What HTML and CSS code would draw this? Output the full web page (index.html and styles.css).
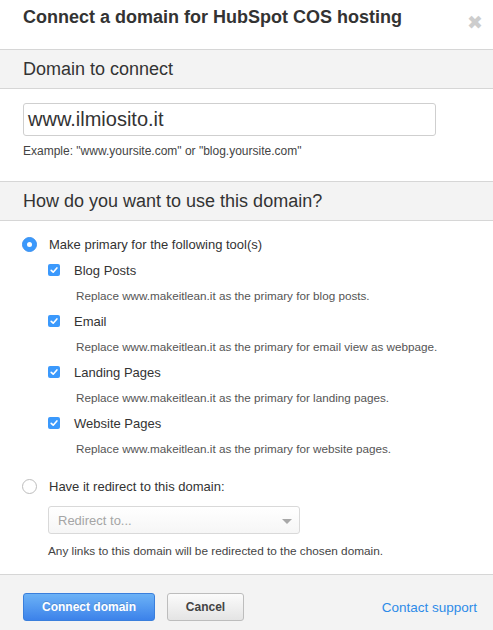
FILE: index.html
```html
<!DOCTYPE html>
<html>
<head>
<meta charset="utf-8">
<link rel="stylesheet" href="styles.css">
</head>
<body>
<div class="modal">
  <div class="modal-header">
    <h1 class="modal-title">Connect a domain for HubSpot COS hosting</h1>
    <span class="close">&#x2716;</span>
  </div>

  <div class="section-title">Domain to connect</div>
  <div class="section-body domain-body">
    <div class="text-input">www.ilmiosito.it</div>
    <div class="hint">Example: "www.yoursite.com" or "blog.yoursite.com"</div>
  </div>

  <div class="section-title">How do you want to use this domain?</div>
  <div class="section-body use-body">
    <div class="radio-row">
      <span class="radio checked"></span>
      <span class="radio-label">Make primary for the following tool(s)</span>
    </div>
    <div class="tools">
      <div class="tool">
        <div class="check-row"><span class="checkbox"><svg viewBox="0 0 12 12" width="12" height="12"><path d="M3.2 6.3 L5.2 8.2 L8.9 3.9" fill="none" stroke="#fff" stroke-width="1.6" stroke-linecap="round" stroke-linejoin="round"/></svg></span><span class="check-label">Blog Posts</span></div>
        <div class="tool-desc">Replace www.makeitlean.it as the primary for blog posts.</div>
      </div>
      <div class="tool">
        <div class="check-row"><span class="checkbox"><svg viewBox="0 0 12 12" width="12" height="12"><path d="M3.2 6.3 L5.2 8.2 L8.9 3.9" fill="none" stroke="#fff" stroke-width="1.6" stroke-linecap="round" stroke-linejoin="round"/></svg></span><span class="check-label">Email</span></div>
        <div class="tool-desc">Replace www.makeitlean.it as the primary for email view as webpage.</div>
      </div>
      <div class="tool">
        <div class="check-row"><span class="checkbox"><svg viewBox="0 0 12 12" width="12" height="12"><path d="M3.2 6.3 L5.2 8.2 L8.9 3.9" fill="none" stroke="#fff" stroke-width="1.6" stroke-linecap="round" stroke-linejoin="round"/></svg></span><span class="check-label">Landing Pages</span></div>
        <div class="tool-desc">Replace www.makeitlean.it as the primary for landing pages.</div>
      </div>
      <div class="tool">
        <div class="check-row"><span class="checkbox"><svg viewBox="0 0 12 12" width="12" height="12"><path d="M3.2 6.3 L5.2 8.2 L8.9 3.9" fill="none" stroke="#fff" stroke-width="1.6" stroke-linecap="round" stroke-linejoin="round"/></svg></span><span class="check-label">Website Pages</span></div>
        <div class="tool-desc">Replace www.makeitlean.it as the primary for website pages.</div>
      </div>
    </div>

    <div class="radio-row redirect-row">
      <span class="radio"></span>
      <span class="radio-label">Have it redirect to this domain:</span>
    </div>
    <div class="redirect">
      <div class="select"><span class="select-text">Redirect to...</span><span class="select-arrow"></span></div>
      <div class="redirect-hint">Any links to this domain will be redirected to the chosen domain.</div>
    </div>
  </div>

  <div class="modal-footer">
    <div class="buttons">
      <button class="btn btn-primary">Connect domain</button>
      <button class="btn btn-default">Cancel</button>
    </div>
    <a class="support-link">Contact support</a>
  </div>
</div>
</body>
</html>
```

FILE: styles.css
```css
* { box-sizing: border-box; }
html, body {
  margin: 0;
  padding: 0;
  background: #fff;
}
body {
  font-family: "Helvetica Neue", Helvetica, Arial, "Liberation Sans", sans-serif;
  color: #333;
  width: 493px;
  height: 630px;
  overflow: hidden;
}
.modal {
  display: flex;
  flex-direction: column;
  height: 630px;
}
.modal-header {
  height: 50px;
  border-bottom: 1px solid #d6d6d6;
  display: flex;
  align-items: flex-start;
  justify-content: space-between;
  padding: 6px 10px 0 23px;
}
.modal-title {
  margin: 0;
  font-size: 18px;
  font-weight: bold;
  color: #333;
  line-height: 23px;
}
.close {
  color: #cdcdcd;
  font-size: 19px;
  line-height: 19px;
  margin-top: 7px;
  font-family: "DejaVu Sans", sans-serif;
}
.section-title {
  background: #f3f3f3;
  height: 39px;
  border-bottom: 1px solid #d6d6d6;
  padding: 0 23px;
  font-size: 18px;
  line-height: 38px;
  color: #333;
}
.section-body {
  padding: 0 23px;
}
.domain-body {
  padding-top: 14px;
  height: 93px;
  border-bottom: 1px solid #d6d6d6;
}
.text-input {
  width: 413px;
  height: 33px;
  border: 1px solid #cfcfcf;
  border-radius: 3px;
  padding: 0 4px;
  font-size: 20px;
  line-height: 31px;
  color: #333;
}
.hint {
  margin-top: 8px;
  font-size: 12px;
  line-height: 14px;
  color: #444;
}
.use-body {
  padding-top: 15px;
  height: 354px;
  border-bottom: 1px solid #d6d6d6;
}
.radio-row {
  display: flex;
  align-items: center;
  height: 17px;
}
.radio {
  width: 15px;
  height: 15px;
  border-radius: 50%;
  border: 1px solid #bdbdbd;
  background: #fff;
  margin-left: -1px;
  position: relative;
  flex: none;
}
.radio.checked {
  background: #3b99fc;
  border-color: #3b91f0;
}
.radio.checked::after {
  content: "";
  position: absolute;
  width: 5px;
  height: 5px;
  border-radius: 50%;
  background: #fff;
  left: 4px;
  top: 4px;
}
.radio-label {
  margin-left: 12px;
  font-size: 13px;
  color: #333;
}
.tools {
  padding-left: 25px;
  margin-top: 6px;
}
.tool {
  height: 51px;
  padding-top: 2px;
}
.check-row {
  display: flex;
  align-items: center;
  height: 18px;
}
.checkbox {
  width: 12px;
  height: 12px;
  border-radius: 2px;
  background: #3b99fc;
  flex: none;
  display: flex;
}
.check-label {
  margin-left: 14px;
  font-size: 13px;
  color: #333;
}
.tool-desc {
  margin-top: 9px;
  margin-left: 28px;
  font-size: 11.7px;
  line-height: 15px;
  color: #555;
}
.redirect-row {
  margin-top: 15px;
}
.redirect {
  padding-left: 25px;
  margin-top: 11px;
}
.select {
  width: 252px;
  height: 28px;
  border: 1px solid #d9d9d9;
  border-radius: 3px;
  background: linear-gradient(#fff, #f6f6f6);
  display: flex;
  align-items: center;
  justify-content: space-between;
  padding: 0 7px 0 9px;
}
.select-text {
  font-size: 13px;
  color: #a5a5a5;
}
.select-arrow {
  width: 0;
  height: 0;
  border-left: 5px solid transparent;
  border-right: 5px solid transparent;
  border-top: 5px solid #a8a8a8;
  margin-top: 2px;
}
.redirect-hint {
  margin-top: 10px;
  font-size: 11.8px;
  line-height: 14px;
  color: #444;
}
.modal-footer {
  flex: 1;
  background: #f3f3f3;
  display: flex;
  align-items: center;
  justify-content: space-between;
  padding: 9px 16px 0 23px;
}
.buttons {
  display: flex;
  gap: 12px;
}
.btn {
  height: 28px;
  border-radius: 3px;
  font-family: "Helvetica Neue", Helvetica, Arial, "Liberation Sans", sans-serif;
  font-size: 12px;
  font-weight: bold;
  padding: 0;
}
.btn-primary {
  width: 132px;
  color: #fff;
  background: linear-gradient(#6cb2f6, #3c82ea);
  border: 1px solid #3a7fdc;
  text-shadow: 0 -1px 0 rgba(0,0,0,0.15);
}
.btn-default {
  width: 77px;
  color: #444;
  background: linear-gradient(#fbfbfb, #e4e4e4);
  border: 1px solid #bdbdbd;
}
.support-link {
  font-size: 13.5px;
  color: #2d8be8;
  text-decoration: none;
}
```
